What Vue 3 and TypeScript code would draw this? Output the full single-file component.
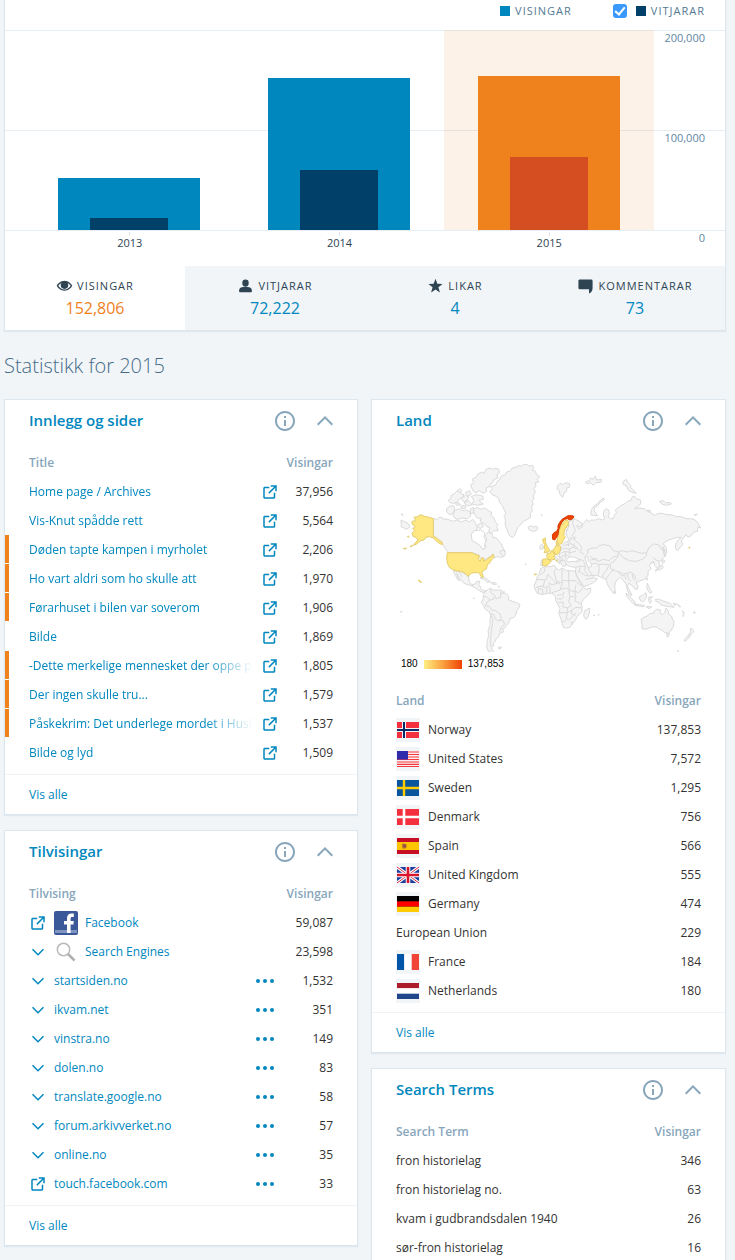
<script setup lang="ts">
import { ref } from 'vue'

interface Year { label: string; views: number; visitors: number; active?: boolean }
interface Tab { name: string; value: string; icon: string; active?: boolean }
interface Post { title: string; views: string; marked?: boolean }
interface Referrer { name: string; views: string; kind: 'external' | 'expand'; logo?: 'facebook' | 'search' }
interface Country { name: string; views: string; flag?: string }
interface Term { term: string; views: string }

const axisMax = 200000
const showVisitors = ref(true)

const years: Year[] = [
  { label: '2013', views: 52000, visitors: 12000 },
  { label: '2014', views: 152000, visitors: 60000 },
  { label: '2015', views: 154000, visitors: 73000, active: true },
]

const pct = (value: number, max: number) => `${(value / max) * 100}%`

const tabs: Tab[] = [
  { name: 'Visingar', value: '152,806', icon: 'eye', active: true },
  { name: 'Vitjarar', value: '72,222', icon: 'user' },
  { name: 'Likar', value: '4', icon: 'star' },
  { name: 'Kommentarar', value: '73', icon: 'comment' },
]

const tabIcons: Record<string, string> = {
  eye: 'M12 4C6.500 4 2.600 8 1 11c1.600 3 5.500 7 11 7s9.400-4 11-7c-1.600-3-5.500-7-11-7zm0 12.300c-4.200 0-7.200-2.900-8.700-5.300 1-1.600 2.600-3.400 4.800-4.400A5.600 5.600 0 0 0 6.600 10a5.400 5.400 0 0 0 10.800 0c0-1.300-.5-2.500-1.400-3.400 2.100 1 3.700 2.800 4.700 4.400-1.500 2.400-4.500 5.300-8.700 5.300z',
  user: 'M12 2a4.500 4.500 0 0 0-4.500 4.500v1a4.500 4.500 0 0 0 9 0v-1A4.500 4.500 0 0 0 12 2zM3 19v-1.500c0-3.500 4-5 9-5s9 1.500 9 5V19a1 1 0 0 1-1 1H4a1 1 0 0 1-1-1z',
  star: 'M12 1l2.600 7.200 7.400.2-5.900 4.600 2.100 7.400L12 16.200l-6.200 4.200L7.900 13 2 8.400l7.400-.2z',
  comment: 'M4 2h16a2 2 0 0 1 2 2v10c0 4-2 6.500-5 8v-6H4a2 2 0 0 1-2-2V4c0-1.100.9-2 2-2z',
}

const posts: Post[] = [
  { title: 'Home page / Archives', views: '37,956' },
  { title: 'Vis-Knut spådde rett', views: '5,564' },
  { title: 'Døden tapte kampen i myrholet', views: '2,206', marked: true },
  { title: 'Ho vart aldri som ho skulle att', views: '1,970', marked: true },
  { title: 'Førarhuset i bilen var soverom', views: '1,906', marked: true },
  { title: 'Bilde', views: '1,869' },
  { title: '-Dette merkelige mennesket der oppe på', views: '1,805', marked: true },
  { title: 'Der ingen skulle tru...', views: '1,579', marked: true },
  { title: 'Påskekrim: Det underlege mordet i Husk', views: '1,537', marked: true },
  { title: 'Bilde og lyd', views: '1,509' },
]

const referrers: Referrer[] = [
  { name: 'Facebook', views: '59,087', kind: 'external', logo: 'facebook' },
  { name: 'Search Engines', views: '23,598', kind: 'expand', logo: 'search' },
  { name: 'startsiden.no', views: '1,532', kind: 'expand' },
  { name: 'ikvam.net', views: '351', kind: 'expand' },
  { name: 'vinstra.no', views: '149', kind: 'expand' },
  { name: 'dolen.no', views: '83', kind: 'expand' },
  { name: 'translate.google.no', views: '58', kind: 'expand' },
  { name: 'forum.arkivverket.no', views: '57', kind: 'expand' },
  { name: 'online.no', views: '35', kind: 'expand' },
  { name: 'touch.facebook.com', views: '33', kind: 'external' },
]

const countries: Country[] = [
  { name: 'Norway', views: '137,853', flag: 'no' },
  { name: 'United States', views: '7,572', flag: 'us' },
  { name: 'Sweden', views: '1,295', flag: 'se' },
  { name: 'Denmark', views: '756', flag: 'dk' },
  { name: 'Spain', views: '566', flag: 'es' },
  { name: 'United Kingdom', views: '555', flag: 'gb' },
  { name: 'Germany', views: '474', flag: 'de' },
  { name: 'European Union', views: '229' },
  { name: 'France', views: '184', flag: 'fr' },
  { name: 'Netherlands', views: '180', flag: 'nl' },
]

const terms: Term[] = [
  { term: 'fron historielag', views: '346' },
  { term: 'fron historielag no.', views: '63' },
  { term: 'kvam i gudbrandsdalen 1940', views: '26' },
  { term: 'sør-fron historielag', views: '16' },
]

const externalPath = 'M19 13v6c0 1.105-.895 2-2 2H5c-1.105 0-2-.895-2-2V7c0-1.105.895-2 2-2h6v2H5v12h12v-6h2zM13 3v2h4.586l-7.793 7.793 1.414 1.414L19 6.414V11h2V3h-8z'
const infoPath = 'M13 9h-2V7h2v2zm0 2h-2v6h2v-6zm-1-7c-4.411 0-8 3.589-8 8s3.589 8 8 8 8-3.589 8-8-3.589-8-8-8m0-2c5.523 0 10 4.477 10 10s-4.477 10-10 10S2 17.523 2 12 6.477 2 12 2z'
const upPath = 'M4 15l8-8 8 8-1.400 1.400L12 9.800l-6.600 6.600z'
const downPath = 'M20 9l-8 8-8-8 1.400-1.400L12 14.200l6.600-6.600z'
</script>

<template>
  <main class="page">
    <section class="panel chart-panel">
      <div class="legend">
        <span class="legend-item"><i class="swatch views"></i>Visingar</span>
        <label class="legend-item">
          <input v-model="showVisitors" type="checkbox" class="check" />
          <i class="swatch visitors"></i>Vitjarar
        </label>
      </div>

      <div class="chart">
        <div class="lines"><span></span><span></span></div>
        <div class="bars">
          <div v-for="y in years" :key="y.label" class="slot" :class="{ active: y.active }">
            <div class="bar" :style="{ height: pct(y.views, axisMax) }">
              <div v-if="showVisitors" class="bar-inner" :style="{ height: pct(y.visitors, y.views) }"></div>
            </div>
          </div>
        </div>
        <div class="y-axis"><span>200,000</span><span>100,000</span><span>0</span></div>
      </div>
      <div class="x-axis"><span v-for="y in years" :key="y.label">{{ y.label }}</span></div>

      <nav class="tabs">
        <a v-for="t in tabs" :key="t.name" href="#" class="tab" :class="{ active: t.active }">
          <span class="tab-label">
            <svg viewBox="0 0 24 24" aria-hidden="true"><path :d="tabIcons[t.icon]" /></svg>{{ t.name }}
          </span>
          <span class="tab-value">{{ t.value }}</span>
        </a>
      </nav>
    </section>

    <h2 class="heading">Statistikk for 2015</h2>

    <div class="columns">
      <div class="column">
        <section class="panel">
          <header class="card-head">
            <h3>Innlegg og sider</h3>
            <button type="button" aria-label="Info"><svg viewBox="0 0 24 24"><path :d="infoPath" /></svg></button>
            <button type="button" aria-label="Gøym"><svg viewBox="0 0 24 24"><path :d="upPath" /></svg></button>
          </header>
          <table>
            <colgroup><col /><col class="c-action" /><col class="c-num" /></colgroup>
            <thead><tr><th>Title</th><th></th><th class="num">Visingar</th></tr></thead>
            <tbody>
              <tr v-for="p in posts" :key="p.title" :class="{ marked: p.marked }">
                <td><a href="#" class="fade">{{ p.title }}</a></td>
                <td class="action">
                  <a href="#" aria-label="Opne"><svg class="i18" viewBox="0 0 24 24"><path :d="externalPath" /></svg></a>
                </td>
                <td class="num">{{ p.views }}</td>
              </tr>
            </tbody>
          </table>
          <footer class="card-foot"><a href="#">Vis alle</a></footer>
        </section>

        <section class="panel">
          <header class="card-head">
            <h3>Tilvisingar</h3>
            <button type="button" aria-label="Info"><svg viewBox="0 0 24 24"><path :d="infoPath" /></svg></button>
            <button type="button" aria-label="Gøym"><svg viewBox="0 0 24 24"><path :d="upPath" /></svg></button>
          </header>
          <table>
            <colgroup><col /><col class="c-action" /><col class="c-num" /></colgroup>
            <thead><tr><th>Tilvising</th><th></th><th class="num">Visingar</th></tr></thead>
            <tbody>
              <tr v-for="r in referrers" :key="r.name">
                <td>
                  <a href="#" class="ref">
                    <svg class="i18" viewBox="0 0 24 24"><path :d="r.kind === 'external' ? externalPath : downPath" /></svg>
                    <svg v-if="r.logo === 'facebook'" class="i24" viewBox="0 0 24 24">
                      <rect width="24" height="24" rx="2" fill="#3b5998" />
                      <rect x="1" y="19" width="22" height="3" fill="#8095c2" />
                      <path d="M13 22v-8.500h-3V10h3V7.500C13 4.300 14.600 2.500 17.600 2.500h2.200V6h-1.600c-1.300 0-1.600.6-1.600 1.800V10h3.200l-.4 3.500h-2.800V22z" fill="#fff" />
                    </svg>
                    <svg v-else-if="r.logo === 'search'" class="i24" viewBox="0 0 24 24">
                      <circle cx="9.500" cy="9.500" r="6.200" fill="#fff" stroke="#b9b9b9" stroke-width="1.500" />
                      <path d="M14 14l6.500 6.500" fill="none" stroke="#b0b0b0" stroke-width="2.500" />
                    </svg>
                    {{ r.name }}
                  </a>
                </td>
                <td class="dots">
                  <button v-if="!r.logo" type="button" aria-label="Meir">
                    <svg class="i24" viewBox="0 0 24 24"><circle cx="5" cy="12" r="2" /><circle cx="12" cy="12" r="2" /><circle cx="19" cy="12" r="2" /></svg>
                  </button>
                </td>
                <td class="num">{{ r.views }}</td>
              </tr>
            </tbody>
          </table>
          <footer class="card-foot"><a href="#">Vis alle</a></footer>
        </section>
      </div>

      <div class="column">
        <section class="panel">
          <header class="card-head">
            <h3>Land</h3>
            <button type="button" aria-label="Info"><svg viewBox="0 0 24 24"><path :d="infoPath" /></svg></button>
            <button type="button" aria-label="Gøym"><svg viewBox="0 0 24 24"><path :d="upPath" /></svg></button>
          </header>

          <div class="map-box">
            <svg class="map" viewBox="18 18 918 588" role="img" aria-label="Visingar per land">
              <g class="land">
                <!-- Greenland and the Arctic islands -->
                <path d="M300 124L307 116 301 110 316 106 322 94 330 88 334 78 346 74 350 66 362 62 366 54 378 52 384 47 394 49 402 43 412 44 418 48 428 46 432 54 426 60 436 64 440 74 449 80 442 88 446 96 436 98 438 108 432 116 436 126 430 136 432 146 426 154 430 162 424 172 427 182 421 190 422 202 412 208 400 214 394 222 384 232 378 244 374 256 368 262 360 258 354 248 350 236 345 222 347 210 342 200 348 190 342 178 336 166 328 156 326 146 316 138 306 134z" />
                <path d="M246 116L242 104 252 98 246 88 258 82 264 72 274 66 282 70 288 58 300 54 308 58 318 54 326 58 328 68 320 74 324 84 312 88 308 98 300 102 298 110 288 114 290 124 280 130 268 122 258 128 250 124z" />
                <path d="M174 152L182 146 184 136 192 132 200 124 210 124 214 132 222 134 216 144 208 146 202 156 190 160 180 158z" />
                <path d="M214 146L226 136 236 140 232 150 222 156zM226 128L238 122 244 132 236 138zM202 122L210 116 216 122 208 128zM244 140L258 134 278 138 280 148 268 150 272 158 280 162 262 166 246 162 252 152zM222 158L236 152 246 164 234 168zM196 160L206 158 212 164 200 166z" />
                <path d="M170 176L180 168 192 168 194 178 190 190 178 194 170 186zM194 182L206 176 216 182 228 180 240 186 242 198 232 206 216 204 204 208 194 204 188 194zM212 168L226 166 228 174 214 176zM240 178L250 172 252 188 242 192z" />
                <path d="M250 178L262 172 272 178 284 174 296 182 306 188 302 196 312 204 316 216 324 224 320 230 324 242 312 242 304 250 296 244 300 232 290 230 282 220 270 214 274 206 262 204 254 194z" />
                <path d="M266 222L276 220 280 230 270 236 262 230z" />
                <!-- Canada -->
                <path d="M130 206L142 208 150 201 162 207 174 208 188 214 200 210 214 216 228 210 238 216 248 208 256 218 262 232 260 240 248 246 244 256 246 268 258 272 272 276 278 286 280 298 288 292 284 280 290 270 286 256 294 246 306 252 310 264 318 262 326 272 334 282 338 292 346 304 340 312 344 318 334 322 322 320 312 324 308 312 300 320 290 325 278 332 268 320 258 312 246 308H175L167 298 160 286 150 272 138 262H130z" />
                <path class="water" d="M244 252L254 242 272 240 284 248 282 262 288 272 284 284 286 294 278 298 270 286 258 278 246 272z" />
                <path d="M330 304L340 300 348 312 340 318 332 312z" />
                <path d="M33 210L44 216 54 220 60 230 50 238 42 234 34 230zM34 192L39 193 37 197z" />
                <!-- Central and South America -->
                <path d="M190 362L204 364 214 364 224 372 230 374 236 384 238 396 246 404 256 402 260 394 270 394 266 404 270 408 272 416 280 422 288 422 280 428 268 422 256 414 246 408 234 404 222 400 214 390 206 380 200 370 204 384 210 392 204 390 196 376z" />
                <path d="M270 384L282 382 294 390 302 396 290 396 282 388zM304 398L316 398 320 403 308 403zM324 408L328 409 327 412z" />
                <path d="M286 424L296 418 302 414 308 420 322 420 334 420 340 428 350 432 356 440 356 450 368 454 380 458 390 464 388 472 380 482 378 494 372 502 360 506 356 518 348 528 344 534 338 536 340 546 328 550 326 560 318 566 316 574 310 580 312 586 306 590 306 600 312 606 304 608 294 602 290 588 292 572 296 556 294 542 300 526 300 510 302 496 298 486 286 478 280 466 274 458 280 446 280 434z" />
                <path d="M326 591L334 591 332 596 326 596zM31 485L35 484 35 487zM250 444L254 444 253 447zM405 342L408 342 407 345z" />
                <path d="M414 232L424 227 430 231 440 228 444 234 440 241 428 244 418 240zM454 194L456 194 456 197z" />
              </g>
              <g class="thin">
                <path d="M302 416L304 430 314 436 318 446 332 442V424M332 430H342V422M282 440L290 440 300 450 310 448 312 440M300 450L290 458 286 468 298 468 304 480 316 482 330 492 334 504 326 512 316 508 312 494 302 490M302 494L308 506 308 520 304 540 302 566 302 590M326 512L338 510 344 522 334 532 328 546M208 366L216 380M246 404L252 412" />
              </g>
              <g class="low">
                <path d="M72 202L82 200 92 194 104 199 118 202 130 206V260L138 262 146 270 156 276 158 284 152 282 142 276 130 264 118 260 108 262 102 270 92 272 80 282 70 286 78 276 84 270 78 262 70 260 66 250 74 242 68 236 76 230 66 222 66 214 78 212z" />
                <path d="M172 308H246L258 314 268 316 266 328 270 334 276 322 282 326 280 334 292 328 300 320 304 320 310 312 312 322 304 330 300 338 292 344 290 356 280 362 276 368 280 380 276 383 270 374 266 368 252 368 244 370 238 374 236 380 230 374 222 368 212 364 200 363 190 360 178 352 172 340 170 322z" />
                <path d="M84 390L88 391 95 396 93 398zM40 296L50 294 46 297zM60 289L68 286 64 291zM52 260L56 258 56 262z" />
              </g>

              <g transform="translate(450 0)">
                <g class="land">
                  <!-- Eurasia -->
                  <path d="M92 212L102 206 114 212 124 218 128 226 116 230 110 226 116 236 126 232 128 222 134 216 140 208 146 216 152 210 166 210 174 206 188 210 194 206 190 194 192 182 200 176 206 180 208 192 204 200 212 206 220 206 224 194 230 188 226 180 234 174 244 166 256 160 262 154 272 152 276 142 282 138 290 146 302 150 302 162 292 170 284 176 298 174 312 176 322 184 330 184 336 192 346 196 354 190 366 190 380 194 394 194 410 200 424 200 438 206 452 206 462 208 472 216 482 234 474 232 472 244 462 246 452 258 444 262 438 254 432 262 424 272 428 284 420 292 412 302 406 294 408 280 416 268 424 262 412 262 398 266 386 270 374 276 370 282 378 292 380 308 372 322 362 332 356 336 360 348 352 354 344 346 342 336 332 340 328 348 334 356 324 364 324 376 314 388 300 392 288 398 294 408 292 418 284 416 274 404 266 400 262 410 270 424 276 436 268 434 262 420 258 402 250 392 242 382 232 388 226 398 224 412 226 424 220 430 210 416 202 402 198 388 188 384 176 378 158 376 162 384 172 386 164 396 148 404 132 410 122 396 112 380 106 368 108 352 92 350 78 344 72 336 60 330 58 316 60 300 66 286 76 276 88 272 84 264 78 252 80 240 88 226 82 216z" />
                  <path class="water" d="M78 330L90 320 104 322 120 330 116 336 98 334 84 336zM134 322L144 320 144 332 154 340 154 350 144 352 140 340z" />
                  <path class="water" d="M90 264L104 260 106 264 92 270z" />
                  <!-- Portugal, Italy, Ireland -->
                  <path d="M4 330L2 346 8 348V330zM38 318L48 320 58 332 60 342 52 336 42 326zM60 332L72 330 78 340 74 350 66 346zM0 286L8 284 10 296 0 298z" />
                  <!-- Africa -->
                  <path d="M2 356L14 350 30 350 44 346 48 354 58 360 66 354 80 362 94 362 106 364 108 374 114 386 122 400 130 412 138 418 152 414 152 424 144 436 130 448 124 460 126 474 126 486 116 494 110 502 106 512 98 520 90 532 76 534 70 532 66 518 62 504 56 490 60 476 54 464 48 452 46 438 36 430 22 430 8 434 -8 430 -14 420 -18 406 -12 394 -8 380 -2 370z" />
                  <path d="M134 482L142 478 148 474 149 486 145 498 139 508 133 504 131 494zM160 496L163 495 163 498zM174 494L177 493 177 496z" />
                  <!-- Arctic Ocean islands -->
                  <path d="M152 190L156 176 162 168 174 160 182 150 192 144 192 150 182 156 174 166 164 172 162 182 168 190 172 198 162 196 154 196zM52 108L60 100 70 104 76 98 90 102 88 112 80 114 80 124 72 128 68 142 60 134 58 122 52 118zM136 96L148 92 152 84 160 88 166 78 170 90 184 88 184 96 168 98 160 106 152 98 142 102zM248 96L258 88 264 98 272 106 272 114 280 120 288 130 274 126 264 120 260 108 250 104zM358 154L370 152 376 158 392 158 394 162 378 166 366 162zM322 180L332 182 328 188zM462 194L472 192 468 197z" />
                  <!-- Japan, South-East Asia, Oceania -->
                  <path d="M368 290L374 300 376 320 372 314zM364 330L372 330 374 336 368 340zM366 344L370 352 364 358 352 360 346 364 348 358 358 354zM322 400L326 408 330 418 336 426 330 430 324 422 320 414zM258 430L266 436 278 448 286 460 278 460 268 448 260 438zM284 462L298 464 314 466 312 470 296 468 284 466zM298 440L308 436 318 428 320 438 316 448 308 456 300 450zM326 442L338 440 332 446 334 456 330 460 326 452zM346 448L358 448 366 452 378 456 390 460 396 466 402 472 388 470 376 468 364 466 358 458 348 454zM400 460L410 462 404 467zM412 462L422 470 419 471zM426 482L434 490 432 492zM460 488L465 485 465 490zM428 494L432 496 430 500zM318 470H336L328 476zM222 424L226 426 225 432zM318 388L323 384 321 391z" />
                  <path d="M303 508L312 502 322 498 330 490 340 490 344 482 352 478 362 480 360 488 368 494 374 488 378 474 384 480 386 492 394 498 398 508 402 516 400 530 394 540 386 550 374 548 366 540 358 538 352 532 340 530 328 534 318 538 306 536 306 522z" />
                  <path d="M380 551L388 551 386 559 381 561zM452 534L458 540 462 544 456 550 452 556 446 554 452 546zM444 556L450 560 442 568 434 574 434 568zM412 602L416 602 415 605z" />
                </g>
                <g class="thin">
                  <path d="M82 216L86 230 80 244M100 208L98 220 106 242 96 258M100 262L108 274 118 282 126 294 120 306 132 312M86 272L96 284 108 290 116 300M134 320L144 310 142 300 156 294 170 294 178 286 192 284 210 288 220 302 236 306 232 318 218 322 208 332 190 328 176 334 164 328 150 330M236 306L248 302 262 306 276 302 290 306 306 310 320 308 318 320 306 328 290 334 268 332 248 322 236 308M320 308L326 294 340 282 356 284 362 296 376 306M338 322L348 330 358 334M330 340L342 334M236 318L222 334 210 342 212 356 224 362 238 366 250 372 262 370 272 366 282 374 288 388M152 342L166 340 178 344 190 342 206 344M144 352L150 366 158 376M176 344L178 360 174 376M206 346L200 362 190 370 188 382M222 356L212 368 204 378 198 388M236 368L246 378 254 376 258 388M262 372L264 384 272 394M276 372L280 386 286 392M106 352L120 348 136 350 134 362 144 374M120 350L118 364 112 368M118 364L132 374 144 378 156 376M136 388L148 386 160 384" />
                  <path d="M62 300L74 294 86 298 100 292 112 298M62 310L76 304 90 308 108 304M64 320L76 314 90 320M76 304V326M88 296V314M52 318L64 322 70 334M84 276L86 290M72 286L92 282M104 280L98 292M108 334L118 328 130 332 136 348M150 318L160 326 172 326" />
                  <path d="M14 352L14 364 0 376M48 356L42 366 50 394 68 398M66 358V392H110M86 362V392M22 372L46 396 60 402M-10 388L18 390 24 374M14 392L10 408 -8 410M24 398L36 404 52 400M4 410L20 412 30 404M20 412V430M30 410V430M68 396L60 420 48 424 36 428M60 418L80 414 88 422 104 424 108 404M86 392L88 422M104 424L116 428 130 412M110 396L124 408M52 436L70 434 72 426M52 446L64 448 72 438M86 424L90 440 86 456 94 466 82 474 68 470 70 456 56 458M104 424L108 440 104 452 122 462M90 440L104 440M56 488H82V472M82 488L96 480 108 472 126 474M82 490L78 506 86 510 98 500 108 488M66 516L78 512M96 480L94 492 106 496M92 518L98 516 96 524" />
                  <path d="M-12 412L-4 414 -6 430M-4 416L8 418 8 434" />
                </g>
                <g class="low">
                  <path d="M8 268L16 264 16 276 20 286 26 296 30 302 24 306 12 308 16 300 12 292 14 284 10 278zM8 328L20 326 28 330 34 333 28 340 22 346 14 348 8 346zM22 310L30 310 34 302 42 306 46 312 42 320 44 328 34 330 26 328 20 320zM38 300L44 294 48 286 54 286 62 290 60 304 52 314 44 312zM48 274L54 270 54 280 56 288 50 286z" />
                  <path d="M74 212L82 210 86 216 84 226 76 236 72 246 72 256 76 262 70 270 66 280 58 284 52 276 52 264 56 252 58 240 64 226z" />
                  <path d="M-18 372L-10 373 -16 375zM446 292L450 292 449 295zM48 330L52 330 51 334z" />
                </g>
                <path class="high" d="M37 254L42 248 50 244 54 236 54 226 60 216 66 208 76 202 84 197 98 197 102 200 98 206 90 210 82 206 74 208 66 216 60 228 56 240 54 254 50 262 44 270 38 268z" />
              </g>
            </svg>
            <div class="map-legend"><span>180</span><i></i><span>137,853</span></div>
          </div>

          <table>
            <colgroup><col /><col class="c-num" /></colgroup>
            <thead><tr><th>Land</th><th class="num">Visingar</th></tr></thead>
            <tbody>
              <tr v-for="c in countries" :key="c.name">
                <td>
                  <span class="country">
                    <svg v-if="c.flag" class="i24" viewBox="0 0 24 24" aria-hidden="true">
                      <rect width="24" height="24" fill="#f1f5f8" />
                      <g v-if="c.flag === 'no'">
                        <rect x="1" y="4" width="22" height="16" fill="#f5303e" />
                        <path d="M8 4v16M1 12h22" stroke="#f3f3f8" stroke-width="4" />
                        <path d="M8 4v16M1 12h22" stroke="#0a2a66" stroke-width="2" />
                      </g>
                      <g v-else-if="c.flag === 'us'">
                        <rect x="1" y="4" width="22" height="16" fill="#fbeeee" />
                        <path d="M1 5h22M1 7.500h22M1 10h22M1 12.500h22M1 15h22M1 17.300h22M1 19.500h22" stroke="#f53a40" stroke-width="1.200" />
                        <rect x="1" y="4" width="11" height="8.500" fill="#2d2bab" />
                      </g>
                      <g v-else-if="c.flag === 'se'">
                        <rect x="1" y="4" width="22" height="16" fill="#08559c" />
                        <path d="M8 4v16M1 12h22" stroke="#fecb00" stroke-width="2.400" />
                      </g>
                      <g v-else-if="c.flag === 'dk'">
                        <rect x="1" y="4" width="22" height="16" fill="#f5303e" />
                        <path d="M8 4v16M1 12h22" stroke="#fff" stroke-width="2.600" />
                      </g>
                      <g v-else-if="c.flag === 'es'">
                        <rect x="1" y="4" width="22" height="16" fill="#c60f24" />
                        <rect x="1" y="8" width="22" height="8" fill="#fdc400" />
                        <path d="M6 10l1.500-.5L9 10h1.500v3.500L9 14.500H6.500z" fill="#b0623c" />
                        <circle cx="8.500" cy="12" r="1" fill="#7a4a5a" />
                      </g>
                      <g v-else-if="c.flag === 'gb'">
                        <rect x="1" y="4" width="22" height="16" fill="#1c3c9c" />
                        <path d="M1 4l22 16M23 4L1 20" stroke="#fff" stroke-width="3.200" />
                        <path d="M1 4l22 16M23 4L1 20" stroke="#e0283c" stroke-width="1" />
                        <path d="M12 4v16M1 12h22" stroke="#fff" stroke-width="4.600" />
                        <path d="M12 4v16M1 12h22" stroke="#d8172c" stroke-width="2.600" />
                      </g>
                      <g v-else-if="c.flag === 'de'">
                        <rect x="1" y="4" width="22" height="16" fill="#000" />
                        <rect x="1" y="9.300" width="22" height="5.400" fill="#f00" />
                        <rect x="1" y="14.700" width="22" height="5.300" fill="#fc0" />
                      </g>
                      <g v-else-if="c.flag === 'fr'">
                        <rect x="1" y="4" width="7.300" height="16" fill="#0055a8" />
                        <rect x="8.300" y="4" width="7.400" height="16" fill="#fff" />
                        <rect x="15.700" y="4" width="7.300" height="16" fill="#f04438" />
                      </g>
                      <g v-else>
                        <rect x="1" y="4" width="22" height="5.300" fill="#ae1c2c" />
                        <rect x="1" y="9.300" width="22" height="5.400" fill="#fff" />
                        <rect x="1" y="14.700" width="22" height="5.300" fill="#21468b" />
                      </g>
                    </svg>
                    {{ c.name }}
                  </span>
                </td>
                <td class="num">{{ c.views }}</td>
              </tr>
            </tbody>
          </table>
          <footer class="card-foot"><a href="#">Vis alle</a></footer>
        </section>

        <section class="panel">
          <header class="card-head">
            <h3>Search Terms</h3>
            <button type="button" aria-label="Info"><svg viewBox="0 0 24 24"><path :d="infoPath" /></svg></button>
            <button type="button" aria-label="Gøym"><svg viewBox="0 0 24 24"><path :d="upPath" /></svg></button>
          </header>
          <table>
            <colgroup><col /><col class="c-num" /></colgroup>
            <thead><tr><th>Search Term</th><th class="num">Visingar</th></tr></thead>
            <tbody>
              <tr v-for="t in terms" :key="t.term"><td>{{ t.term }}</td><td class="num">{{ t.views }}</td></tr>
            </tbody>
          </table>
        </section>
      </div>
    </div>
  </main>
</template>

<style>
body {
  margin: 0;
  background: #f1f5f8;
}
</style>

<style scoped>
* {
  box-sizing: border-box;
}
.page {
  padding: 0 9px 0 4px;
  font: 12px/18px 'Open Sans', 'Noto Sans', sans-serif;
  color: #333;
}
a {
  color: #0087be;
  text-decoration: none;
}
button {
  display: block;
  padding: 0;
  border: 0;
  background: none;
  cursor: pointer;
}
svg {
  display: block;
  flex: none;
  fill: currentColor;
}
.i18 {
  width: 18px;
  height: 18px;
}
.i24 {
  width: 24px;
  height: 24px;
}
.panel {
  background: #fff;
  border: 1px solid #dce6ec;
  box-shadow: 0 1px 1px rgba(200, 215, 225, 0.4);
}
.chart-panel {
  border-top: 0;
}

/* Chart */
.legend {
  display: flex;
  justify-content: flex-end;
  gap: 41px;
  height: 30px;
  padding: 0 20px 8px 0;
}
.legend-item {
  display: flex;
  align-items: center;
  font-size: 11px;
  letter-spacing: 1px;
  text-transform: uppercase;
  color: #537994;
}
.swatch {
  width: 10px;
  height: 10px;
  margin-right: 5px;
}
.swatch.views {
  background: #0087be;
}
.swatch.visitors {
  background: #004069;
}
.check {
  appearance: none;
  width: 14px;
  height: 14px;
  margin: 0 9px 0 0;
  border-radius: 3px;
  background: #3b99fc;
  display: grid;
  place-items: center;
}
.check:checked::after {
  content: '';
  width: 4px;
  height: 8px;
  margin-bottom: 2px;
  border: solid #fff;
  border-width: 0 2px 2px 0;
  transform: rotate(40deg);
}
.chart {
  position: relative;
  display: flex;
  height: 201px;
  padding-left: 19px;
  border-bottom: 1px solid #e6eef3;
}
.lines {
  position: absolute;
  inset: 0;
  display: flex;
  flex-direction: column;
}
.lines span {
  flex: 1;
  border-top: 1px solid #e6eef3;
}
.bars {
  position: relative;
  flex: 1;
  display: flex;
}
.slot {
  flex: 1;
  display: flex;
  align-items: flex-end;
  justify-content: center;
}
.slot.active {
  background: rgba(240, 130, 30, 0.1);
}
.bar {
  width: 68%;
  display: flex;
  align-items: flex-end;
  justify-content: center;
  background: #0087be;
}
.bar-inner {
  width: 54%;
  background: #004069;
}
.active .bar {
  background: #f0821e;
}
.active .bar-inner {
  background: #d54e21;
}
.y-axis {
  position: relative;
  width: 71px;
  padding-right: 20px;
  text-align: right;
  font-size: 11px;
  line-height: 16px;
  color: #5f87a4;
}
.y-axis span {
  display: block;
  height: 100px;
}
.x-axis {
  display: flex;
  height: 35px;
  padding: 1px 71px 0 20px;
  font-size: 11px;
  line-height: 14px;
  color: #2e4453;
}
.x-axis span {
  flex: 1;
  text-align: center;
}
.x-axis span::before {
  content: '';
  display: block;
  width: 1px;
  height: 4px;
  margin: 0 auto;
  background: #dce6ec;
}
.tabs {
  display: flex;
}
.tab {
  flex: 1;
  height: 64px;
  padding-top: 10px;
  background: #f1f5f8;
  text-align: center;
}
.tab.active {
  background: #fff;
}
.tab-label {
  display: flex;
  justify-content: center;
  align-items: center;
  gap: 4px;
  height: 20px;
  font-size: 11px;
  letter-spacing: 1px;
  text-transform: uppercase;
  color: #2e4453;
}
.tab-label svg {
  width: 17px;
  height: 17px;
}
.tab-value {
  display: block;
  font-size: 16px;
  line-height: 24px;
}
.tab.active .tab-value {
  color: #f0821e;
}

.heading {
  margin: 20px 0 18px;
  font-size: 20px;
  line-height: 30px;
  font-weight: 300;
  color: #466c88;
}

/* Cards */
.columns {
  display: grid;
  grid-template-columns: 354fr 355fr;
  gap: 13px;
  align-items: start;
}
.column {
  display: grid;
  gap: 15px;
  min-width: 0;
}
.card-head {
  display: flex;
  align-items: center;
  gap: 16px;
  height: 42px;
  margin-bottom: 6px;
  padding: 0 20px 0 24px;
}
.card-head h3 {
  flex: 1;
  margin: 0;
  padding-bottom: 2px;
  font-size: 15px;
  line-height: 22px;
  font-weight: 600;
  color: #0087be;
}
.card-head button {
  color: #87a6bc;
}
.card-head svg {
  width: 24px;
  height: 24px;
}
table {
  width: 100%;
  table-layout: fixed;
  border-collapse: collapse;
}
.c-action {
  width: 26px;
}
.c-num {
  width: 78px;
}
th,
td {
  height: 29px;
  padding: 0;
  text-align: left;
  white-space: nowrap;
}
th {
  font-weight: 600;
  color: #87a6bc;
}
th:first-child,
td:first-child {
  padding-left: 24px;
}
th.num,
td.num {
  padding-right: 24px;
  text-align: right;
}
.marked td:first-child {
  background: linear-gradient(#f0821e, #f0821e) 0 0 / 4px 28px no-repeat;
}
.fade {
  display: block;
  overflow: hidden;
  mask-image: linear-gradient(to left, transparent, #000 48px);
}
.action a {
  display: flex;
  justify-content: flex-end;
}
.dots button {
  color: #0087be;
}
.ref {
  display: flex;
  align-items: center;
  gap: 7px;
}
.country {
  display: flex;
  align-items: center;
  gap: 8px;
}
.card-foot {
  display: flex;
  align-items: center;
  height: 40px;
  margin-top: 7px;
  padding: 0 24px;
  border-top: 1px solid #f0f4f7;
}

/* Map */
.map-box {
  padding: 8px 23px 14px 24px;
}
.map {
  width: 100%;
  stroke-linejoin: round;
}
.land {
  fill: #f4f4f4;
  stroke: #dadada;
  stroke-width: 3;
}
.water {
  fill: #fff;
}
.thin {
  fill: none;
  stroke: #dadada;
  stroke-width: 3;
}
.low {
  fill: #ffe782;
  stroke: #e3cd70;
  stroke-width: 3;
}
.high {
  fill: #ef4302;
  stroke: #d63c02;
  stroke-width: 3;
}
.map-legend {
  display: flex;
  align-items: center;
  gap: 6px;
  height: 16px;
  margin-top: 4px;
  padding-left: 5px;
  font: 10px/16px 'Liberation Sans', Arial, sans-serif;
  color: #000;
}
.map-legend i {
  width: 38px;
  height: 9px;
  background: linear-gradient(to right, #ffee82, #f9a03f 50%, #ef4302);
}
</style>
